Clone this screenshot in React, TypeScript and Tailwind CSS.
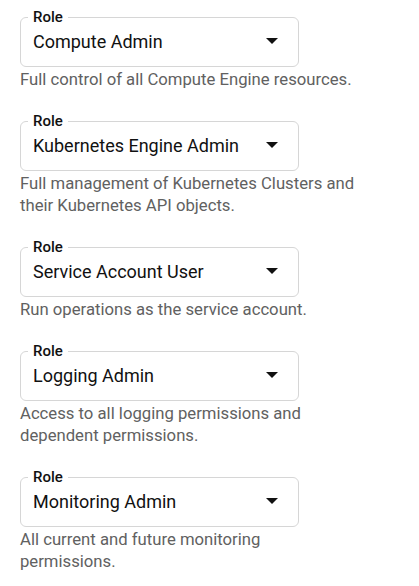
import React from "react";

const roles = [
  { value: "Compute Admin", help: ["Full control of all Compute Engine resources."] },
  {
    value: "Kubernetes Engine Admin",
    help: ["Full management of Kubernetes Clusters and", "their Kubernetes API objects."],
  },
  { value: "Service Account User", help: ["Run operations as the service account."] },
  { value: "Logging Admin", help: ["Access to all logging permissions and", "dependent permissions."] },
  { value: "Monitoring Admin", help: ["All current and future monitoring", "permissions."] },
];

const RoleSelect = ({ value, help }: { value: string; help: string[] }) => {
  return (
    <div>
      <div className="relative w-[279px] h-[50px] rounded-md border border-[#d6d6d6] flex items-center pl-[12px] pr-[20px]">
        <span className="absolute -top-[11px] left-[7px] px-[5px] bg-white text-[15px] leading-[20px] font-medium text-[#111]">
          Role
        </span>
        <span className="flex-1 text-[18px] text-[#111] pb-[2px]">{value}</span>
        <svg width="12" height="6" viewBox="0 0 12 6" className="mt-[-2px]">
          <path d="M0 0h12L6 6z" fill="#111" />
        </svg>
      </div>
      <p className="mt-[2px] text-[16.7px] leading-[22px] text-[#616161] whitespace-nowrap">
        {help.map((line, i) => (
          <React.Fragment key={i}>
            {i > 0 && <br />}
            {line}
          </React.Fragment>
        ))}
      </p>
    </div>
  );
};

export default function App() {
  return (
    <div
      className="min-h-[586px] bg-white pt-[17px] pl-[20px] flex flex-col gap-[30px]"
      style={{ fontFamily: "Roboto, 'Liberation Sans', sans-serif" }}
    >
      {roles.map((r, i) => (
        <RoleSelect key={i} value={r.value} help={r.help} />
      ))}
    </div>
  );
}
